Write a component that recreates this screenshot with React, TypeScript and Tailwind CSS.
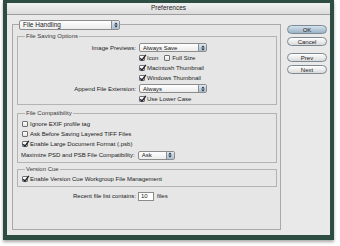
import React from "react";

const sans = "font-['Liberation_Sans',Arial,sans-serif]";

function Check({ checked }: { checked?: boolean }) {
  return (
    <span className="relative flex h-[6px] w-[6px] shrink-0 rounded-[1px] border border-[#707070] bg-gradient-to-b from-white to-[#e2e2e2]">
      {checked && (
        <svg className="absolute -left-[1px] -top-[2px] overflow-visible" width="8" height="8" viewBox="0 0 8 8">
          <path d="M1.2 4.2 L3 6.2 L6.8 0.8" fill="none" stroke="#1c2430" strokeWidth="1.4" />
        </svg>
      )}
    </span>
  );
}

function Popup({ label, w, tall }: { label: string; w: string; tall?: boolean }) {
  return (
    <div className={`flex ${tall ? "h-[10px]" : "h-[9px]"} ${w} items-stretch overflow-hidden rounded-[2px] border border-[#8c8c8c] bg-gradient-to-b from-white to-[#ececec]`}>
      <span className={`flex flex-1 items-center pl-[3px] ${tall ? "text-[6.5px]" : "text-[6px]"} leading-none text-[#1a1a1a]`}>{label}</span>
      <span className="flex w-[8px] items-center justify-center border-l border-[#8c8c8c] bg-gradient-to-b from-[#dfe9f3] to-[#a9bdd0]">
        <svg width="4" height="6" viewBox="0 0 4 6">
          <path d="M0.3 2.4 L2 0.6 L3.7 2.4 Z M0.3 3.6 L2 5.4 L3.7 3.6 Z" fill="#1f2a36" />
        </svg>
      </span>
    </div>
  );
}

function CheckRow({ label, checked, pl }: { label: string; checked?: boolean; pl: string }) {
  return (
    <div className={`flex h-[10px] items-center gap-[2px] ${pl}`}>
      <Check checked={checked} />
      <span className="text-[6px] leading-none">{label}</span>
    </div>
  );
}

function Group({ title, children, className }: { title: string; children: React.ReactNode; className: string }) {
  return (
    <div className={`relative ml-[4px] mr-[3px] border border-[#b3b3b3] ${className}`}>
      <span className="absolute -top-[4px] left-[7px] bg-[#e6e6e6] px-[1px] text-[6px] leading-none text-[#3a3a3a]">{title}</span>
      {children}
    </div>
  );
}

function Button({ label, primary, className }: { label: string; primary?: boolean; className: string }) {
  return (
    <div
      className={`flex h-[9px] w-[40px] items-center justify-center rounded-full border border-[#7d8a94] text-[6px] leading-none text-[#1a1a1a] ${
        primary ? "bg-gradient-to-b from-[#d3e2ee] to-[#9cb3c6]" : "bg-gradient-to-b from-white to-[#dadada]"
      } ${className}`}
    >
      {label}
    </div>
  );
}

export default function App() {
  return (
    <div className={`h-[246px] w-[340px] overflow-hidden bg-white ${sans} text-[#1a1a1a]`}>
      <div className="ml-[3px] flex h-[240px] w-[331px] flex-col border-x-[4px] border-b-[5px] border-t-[3px] border-[#2d4c42] shadow-[0_2px_3px_rgba(0,0,0,0.35)]">
        <div className="flex h-[12px] shrink-0 items-center justify-center border-b border-[#9c9c9c] bg-gradient-to-b from-[#f0f0f0] to-[#dcdcdc] text-[6.5px] leading-none text-[#222]">
          Preferences
        </div>
        <div className="flex flex-1 bg-[#e9e9e9]">
          <div className="relative ml-[5px] mt-[9px] h-[206px] w-[269px] border border-[#a9a9a9] bg-[#e6e6e6]">
            <div className="absolute -top-[5px] left-[6px]">
              <Popup label="File Handling" w="w-[101px]" tall />
            </div>

            <Group title="File Saving Options" className="mt-[11px] pb-0 pt-[5px]">
              <div className="flex h-[11px] items-center">
                <span className="w-[118px] text-right text-[6px] leading-none">Image Previews:</span>
                <div className="ml-[3px]">
                  <Popup label="Always Save" w="w-[68px]" />
                </div>
              </div>
              <div className="flex h-[10px] items-center pl-[121px]">
                <Check checked />
                <span className="ml-[2px] text-[6px] leading-none">Icon</span>
                <span className="ml-[6px]">
                  <Check />
                </span>
                <span className="ml-[2px] text-[6px] leading-none">Full Size</span>
              </div>
              <CheckRow label="Macintosh Thumbnail" checked pl="pl-[121px]" />
              <CheckRow label="Windows Thumbnail" checked pl="pl-[121px]" />
              <div className="flex h-[11px] items-center">
                <span className="w-[118px] text-right text-[6px] leading-none">Append File Extension:</span>
                <div className="ml-[3px]">
                  <Popup label="Always" w="w-[68px]" />
                </div>
              </div>
              <CheckRow label="Use Lower Case" checked pl="pl-[121px]" />
            </Group>

            <Group title="File Compatibility" className="mt-[8px] pb-[2px] pt-[5px]">
              <CheckRow label="Ignore EXIF profile tag" pl="pl-[4px]" />
              <CheckRow label="Ask Before Saving Layered TIFF Files" pl="pl-[4px]" />
              <div className="h-[11px]">
                <CheckRow label="Enable Large Document Format (.psb)" checked pl="pl-[4px]" />
              </div>
              <div className="flex h-[10px] items-center pl-[3px]">
                <span className="text-[6px] leading-none">Maximize PSD and PSB File Compatibility:</span>
                <div className="ml-[3px]">
                  <Popup label="Ask" w="w-[37px]" />
                </div>
              </div>
            </Group>

            <Group title="Version Cue" className="mt-[6px] pb-[2px] pt-[4px]">
              <CheckRow label="Enable Version Cue Workgroup File Management" checked pl="pl-[4px]" />
            </Group>

            <div className="mt-[4px] flex h-[10px] items-center">
              <span className="w-[123px] text-right text-[6px] leading-none">Recent file list contains:</span>
              <span className="ml-[2px] flex h-[9px] w-[16px] items-center border border-[#8c8c8c] bg-white pl-[2px] text-[6px] leading-none">
                10
              </span>
              <span className="ml-[3px] text-[6px] leading-none">files</span>
            </div>
          </div>

          <div className="ml-[6px] flex flex-col">
            <Button label="OK" primary className="mt-[10px]" />
            <Button label="Cancel" className="mt-[3px]" />
            <Button label="Prev" className="mt-[7px]" />
            <Button label="Next" className="mt-[3px]" />
          </div>
        </div>
      </div>
    </div>
  );
}
